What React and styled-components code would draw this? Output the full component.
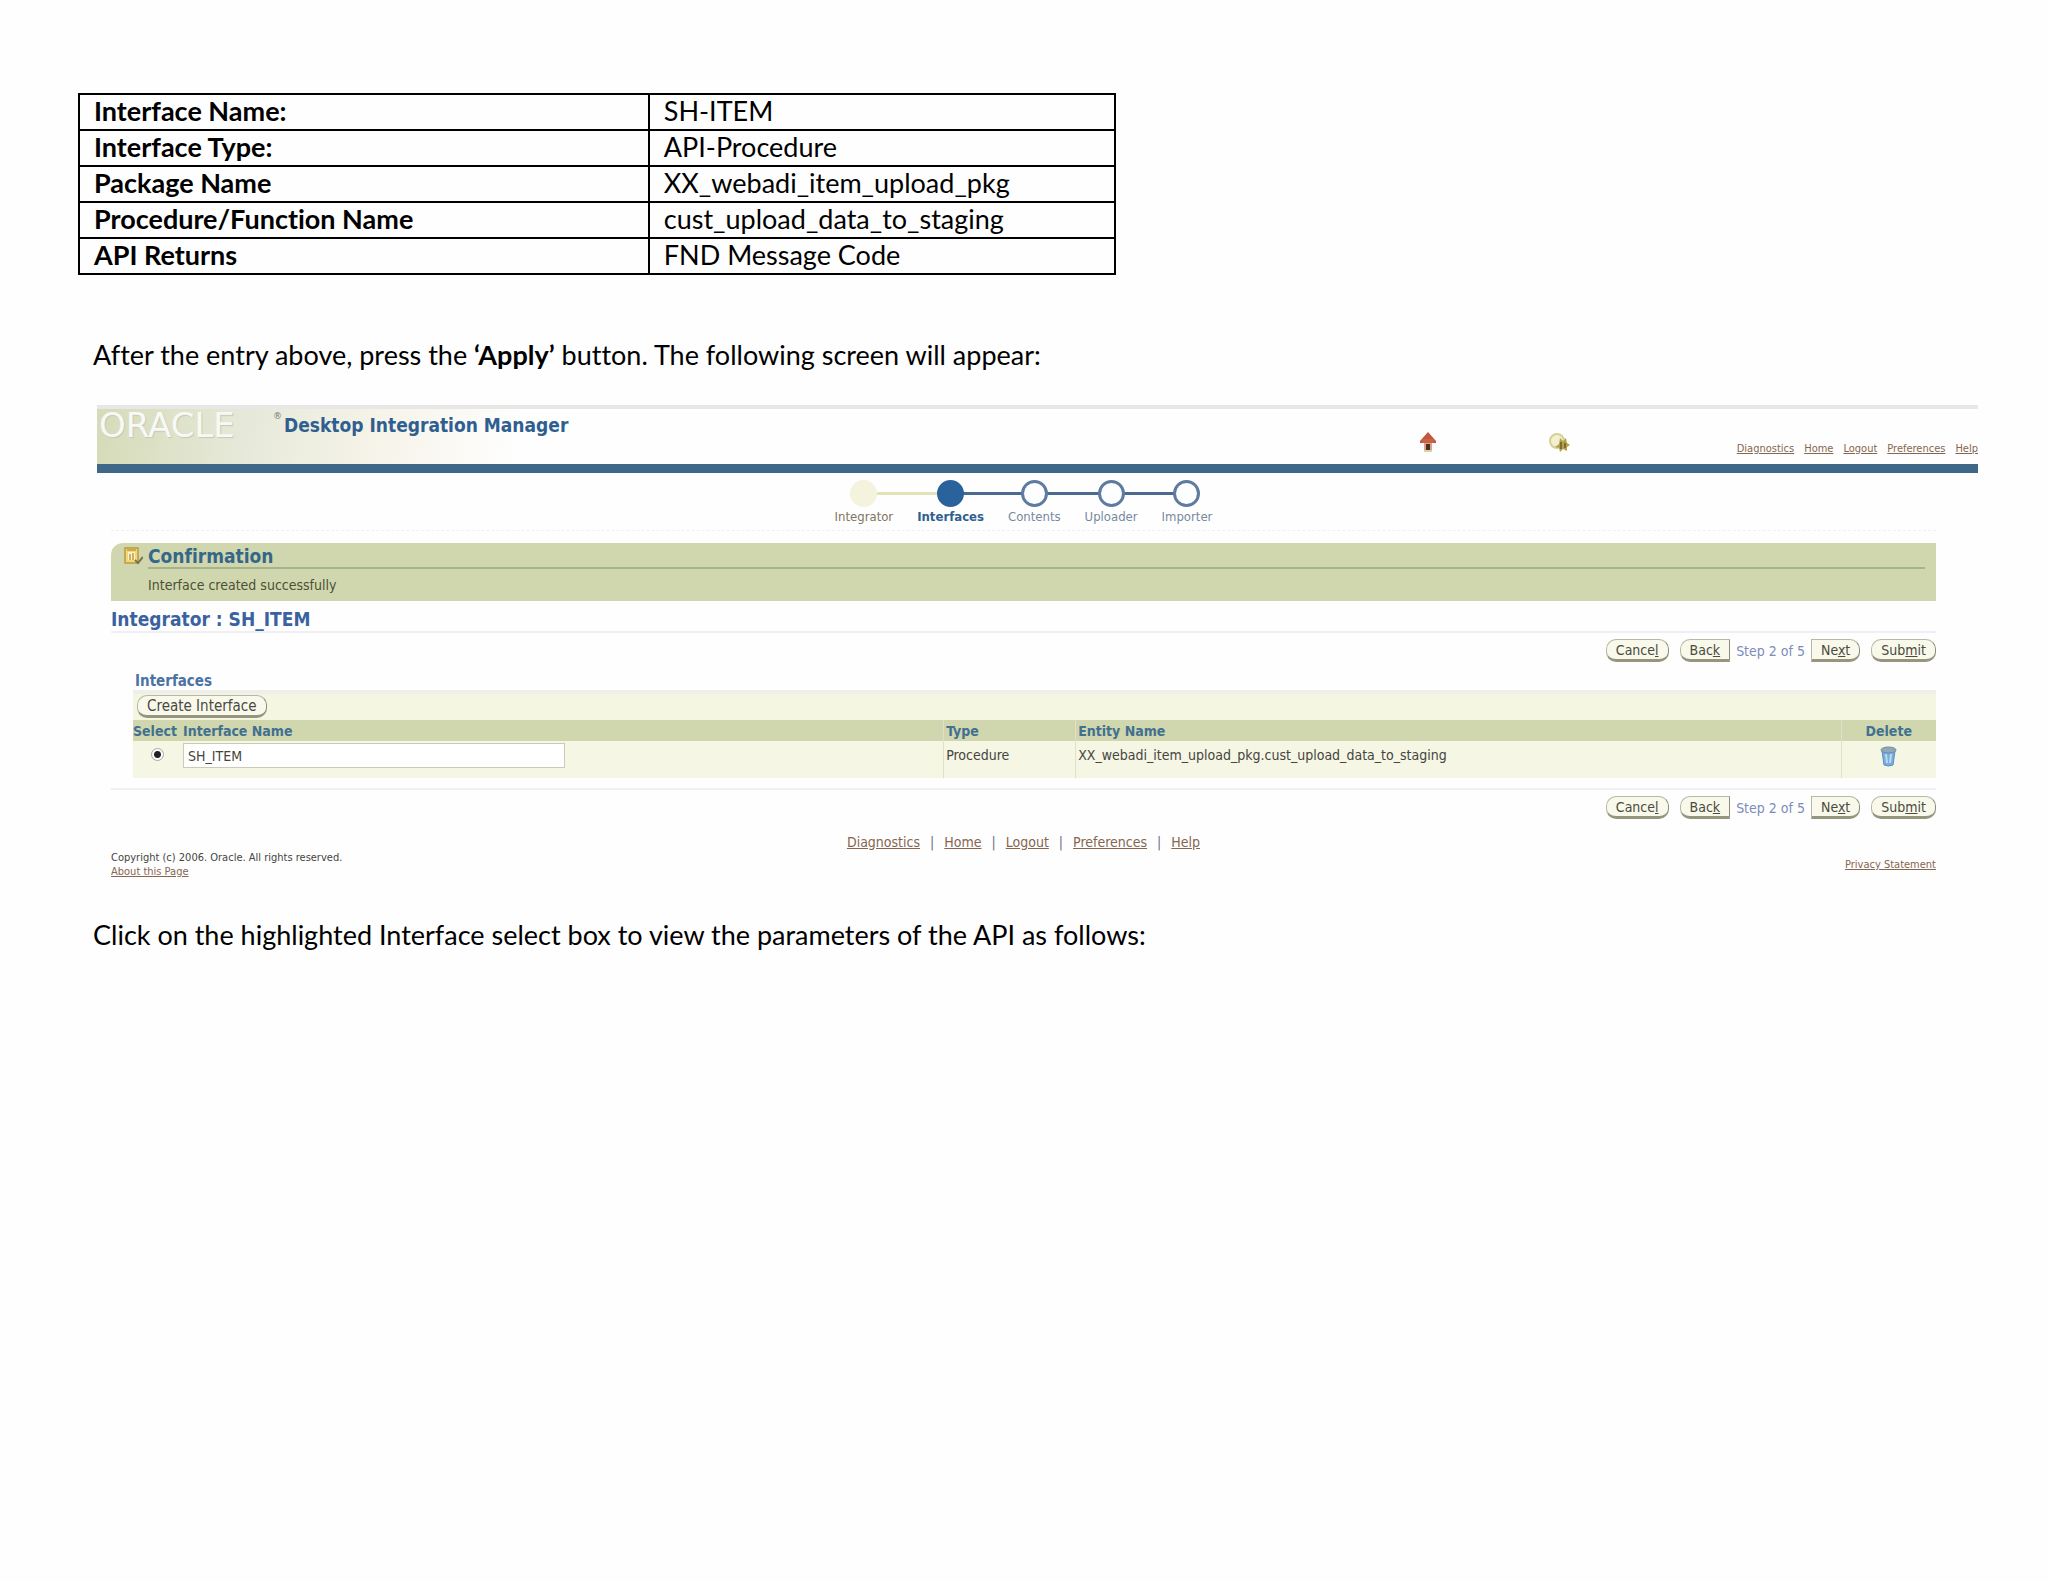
import React from "react";
import styled, { createGlobalStyle, css } from "styled-components";

const ui = '"DejaVu Sans Condensed", "DejaVu Sans", sans-serif';
const navy = "#2f5f90";
const line = "#f0eff3";

const Global = createGlobalStyle`
  * { box-sizing: border-box; }
  body {
    margin: 0;
    background: #fefefe;
    color: #000;
    font-family: Lato, "Liberation Sans", sans-serif;
    font-size: 27px;
    font-variant-ligatures: none;
    line-height: 36px;
  }
`;

const Page = styled.main`
  padding: 93px 70px 80px 78px;
`;

const SpecTable = styled.table`
  width: 1038px;
  max-width: 100%;
  table-layout: fixed;
  border-collapse: collapse;
  th, td {
    height: 36px;
    padding: 0 14px 2px;
    border: 2px solid #000;
    line-height: 32px;
    text-align: left;
  }
  th { width: 55%; font-weight: 700; }
`;

const Paragraph = styled.p`
  margin: ${(p) => (p.$spaced ? "62px" : "0")} 15px 0;
`;

const Screen = styled.section`
  margin: 32px 0 38px 19px;
  overflow: hidden;
  background: #fefefe;
  color: #45453f;
  font-family: ${ui};
  font-size: 14px;
  line-height: 18px;
`;

const Header = styled.header`
  display: flex;
  align-items: flex-start;
  height: 68px;
  border-top: 4px solid #e6e7e6;
  border-bottom: 9px solid #3f6788;
  background: linear-gradient(100deg, #d5dbb8 0, #e6e9d9 150px, #f6f3e9 280px, #fefefe 420px);
`;

const Logo = styled.div`
  display: flex;
  justify-content: space-between;
  width: 187px;
  padding: 2px 2px 0 2px;
  color: #f8f9f4;
  font-family: "DejaVu Sans", sans-serif;
  font-size: 34px;
  line-height: 28px;
  text-shadow: 1px 1px 1px #c3c8bc;
  sup {
    color: #777;
    font-size: 9px;
    line-height: 10px;
    text-shadow: none;
  }
`;

const Product = styled.h1`
  flex: 1;
  margin: 6px 0 0;
  color: ${navy};
  font-size: 19px;
  line-height: 20px;
`;

const HeaderIcons = styled.div`
  display: flex;
  gap: 111px;
  padding: 23px 167px 0 0;
  svg { display: block; }
`;

const HeaderLinks = styled.nav`
  display: flex;
  gap: 10px;
  padding-top: 31px;
  font-size: 11px;
`;

const Link = styled.a`
  color: #86664f;
  text-decoration: underline;
`;

const Body = styled.div`
  padding: 0 42px 0 14px;
`;

const Steps = styled.ol`
  display: flex;
  justify-content: center;
  gap: 24px;
  margin: 0;
  padding: 7px 0 5px;
  border-bottom: 1px dashed ${line};
  list-style: none;
  font-size: 13px;
  line-height: 16px;
`;

const connector = css`
  content: "";
  position: absolute;
  top: 12px;
  height: 3px;
`;

const Step = styled.li`
  position: relative;
  display: flex;
  flex-direction: column;
  align-items: center;
  gap: 2px;
  color: ${(p) => (p.$state === "done" ? "#80745f" : p.$state === "now" ? navy : "#7788a0")};
  font-weight: ${(p) => (p.$state === "now" ? 700 : 400)};
  &:not(:first-child)::before {
    ${connector}
    left: -12px;
    right: 50%;
    background: ${(p) => (p.$state === "now" ? "#e2e2b8" : "#4a6a92")};
  }
  &:not(:last-child)::after {
    ${connector}
    left: 50%;
    right: -12px;
    background: ${(p) => (p.$state === "done" ? "#e2e2b8" : "#4a6a92")};
  }
`;

const Dot = styled.span`
  z-index: 1;
  width: 27px;
  height: 27px;
  border: 3px solid ${(p) => (p.$state === "done" ? "#f4f3dd" : p.$state === "now" ? "#2a629b" : "#5f7ba0")};
  border-radius: 50%;
  background: ${(p) => (p.$state === "done" ? "#f4f3dd" : p.$state === "now" ? "#2a629b" : "#fcfeff")};
`;

const Message = styled.section`
  display: grid;
  grid-template-columns: 20px 1fr;
  column-gap: 5px;
  margin-top: 12px;
  padding: 2px 11px 7px 12px;
  border-radius: 12px 0 0 0;
  background: #d0d7ae;
  svg { margin-top: 1px; }
  h2 {
    margin: 0;
    border-bottom: 2px solid #a5b48a;
    color: #35678a;
    font-size: 19px;
    line-height: 22px;
  }
  p { grid-column: 2; margin: 7px 0 0; color: #4c4f35; }
`;

const Title = styled.h2`
  margin: 0;
  padding: 8px 0 2px;
  border-bottom: 2px solid ${line};
  color: #3a62a0;
  font-size: 19px;
  line-height: 20px;
`;

const Actions = styled.div`
  display: flex;
  justify-content: flex-end;
  align-items: center;
  gap: 11px;
  padding-top: 6px;
`;

const Pager = styled.div`
  display: flex;
  align-items: center;
  gap: 6px;
  color: #7d8cba;
`;

const radii = { both: "10px", left: "10px 0 0 10px", right: "0 10px 10px 0" };

const Button = styled.button`
  height: 23px;
  padding: 0 9px;
  border: 1px solid #b7b8a4;
  border-right-color: #8b8c78;
  border-bottom: 3px solid #96967f;
  border-radius: ${(p) => radii[p.$round || "both"]};
  background: #f8f9ea;
  color: #4a4a40;
  font: 14px/18px ${ui};
`;

const Section = styled.section`
  margin: 10px 0 10px 22px;
  h3 {
    margin: 0;
    padding-left: 2px;
    color: #4a72a5;
    font-size: 15px;
    line-height: 18px;
  }
`;

const Toolbar = styled.div`
  padding: 1px 4px 2px;
  border-top: 4px solid #eeefe6;
  background: #f4f6e1;
  ${Button} { display: block; font-size: 15px; }
`;

const Grid = styled.table`
  width: 100%;
  table-layout: fixed;
  border-collapse: collapse;
  background: #f5f6e4;
  th, td { padding: 0 2px; text-align: left; white-space: nowrap; }
  th {
    height: 21px;
    background: #d0d7ae;
    color: #417090;
    font-size: 14px;
  }
  td { height: 37px; vertical-align: top; padding-top: 5px; color: #45453f; }
  th + th, td + td { border-left: 1px solid #dfe2c6; }
  th:nth-child(2), td:nth-child(2) { border-left: 0; }
  th:first-child { padding: 0; }
  td:first-child { text-align: center; }
  td:nth-child(2) { padding-top: 2px; }
  th:last-child, td:last-child { text-align: center; }
`;

const Col = styled.col`
  width: ${(p) => p.$w};
`;

const Radio = styled.input`
  appearance: none;
  width: 13px;
  height: 13px;
  margin: 2px 0 0;
  border: 1px solid #a8a99c;
  border-radius: 50%;
  background: radial-gradient(circle, #222 0 3px, #fff 4px);
`;

const NameInput = styled.input`
  display: block;
  width: 382px;
  height: 25px;
  padding: 0 4px;
  border: 1px solid #c9cbb9;
  background: #fff;
  color: #45453f;
  font: 14px/18px ${ui};
`;

const IconButton = styled.button`
  padding: 0;
  border: 0;
  background: none;
  svg { display: block; }
`;

const Rule = styled.hr`
  margin: 0;
  border: 0;
  border-top: 2px solid ${line};
`;

const FooterLinks = styled.nav`
  display: flex;
  justify-content: center;
  gap: 10px;
  padding-top: 14px;
  color: #6a6f85;
`;

const Legal = styled.footer`
  display: flex;
  justify-content: space-between;
  align-items: center;
  font-size: 11px;
  line-height: 14px;
  p { margin: 0; }
`;

const links = ["Diagnostics", "Home", "Logout", "Preferences", "Help"];

const specs = [
  ["Interface Name:", "SH-ITEM"],
  ["Interface Type:", "API-Procedure"],
  ["Package Name", "XX_webadi_item_upload_pkg"],
  ["Procedure/Function Name", "cust_upload_data_to_staging"],
  ["API Returns", "FND Message Code"],
];

const steps = [
  ["Integrator", "done"],
  ["Interfaces", "now"],
  ["Contents", "next"],
  ["Uploader", "next"],
  ["Importer", "next"],
];

const HomeIcon = () => (
  <svg width="18" height="21" viewBox="0 0 18 21" aria-hidden="true">
    <path d="M9 0 17 9v2h-3V9H4v2H1V9z" fill="#c4563f" />
    <path d="M5 8h8v12H5z" fill="#d8a58c" />
    <path d="M3 7h12v4H3z" fill="#c9604a" />
    <path d="M7 12h4v6H7z" fill="#4e2e20" />
    <path d="M5 18h8v2H5z" fill="#d9d3a0" />
  </svg>
);

const KeyIcon = () => (
  <svg width="22" height="21" viewBox="0 0 22 21" aria-hidden="true">
    <circle cx="9" cy="9" r="7" fill="#f2f0cf" stroke="#d5cf98" strokeWidth="2" />
    <path d="m12 6 3 3 3-3 1 5 3 2-3 2v4l-4-2-3 3-1-4-4-1 4-3z" fill="#b5a04c" />
    <path d="M12 10h2v7h-2zm4 1h2v5h-2z" fill="#7d6b30" />
  </svg>
);

const ConfirmIcon = () => (
  <svg width="20" height="19" viewBox="0 0 20 19" aria-hidden="true">
    <path d="M2 2h13v15H2z" fill="#f0d777" stroke="#b99a45" strokeWidth="1.5" />
    <path d="M5 6h7v8H5z" fill="#fbf3cb" />
    <path d="M7 8v6M10 7v7M4 4h9" stroke="#c79a3a" strokeWidth="1.5" />
    <path d="m12 14 3 3 5-6" fill="none" stroke="#7b7455" strokeWidth="2" />
  </svg>
);

const TrashIcon = () => (
  <svg width="17" height="21" viewBox="0 0 17 21" aria-hidden="true">
    <path d="M2 5h13l-2 14q-4 2-9 0z" fill="#78aede" stroke="#5b8fc8" />
    <ellipse cx="8.500" cy="4" rx="7.500" ry="3" fill="#8ea9b8" stroke="#6d8ba3" />
    <path d="m6 8 1 9M11 8l-1 9" stroke="#b8dcf5" strokeWidth="2" />
  </svg>
);

const Wizard = () => (
  <Actions>
    <Button type="button">Cance<u>l</u></Button>
    <Pager>
      <Button type="button" $round="left">Bac<u>k</u></Button>
      <span>Step 2 of 5</span>
      <Button type="button" $round="right">Ne<u>x</u>t</Button>
    </Pager>
    <Button type="button">Sub<u>m</u>it</Button>
  </Actions>
);

export default function App() {
  return (
    <Page>
      <Global />
      <SpecTable>
        <tbody>
          {specs.map(([name, value]) => (
            <tr key={name}>
              <th scope="row">{name}</th>
              <td>{value}</td>
            </tr>
          ))}
        </tbody>
      </SpecTable>

      <Paragraph $spaced>
        After the entry above, press the <b>‘Apply’</b> button. The following screen will appear:
      </Paragraph>

      <Screen>
        <Header>
          <Logo>
            <span>ORACLE</span>
            <sup>®</sup>
          </Logo>
          <Product>Desktop Integration Manager</Product>
          <HeaderIcons>
            <HomeIcon />
            <KeyIcon />
          </HeaderIcons>
          <HeaderLinks>
            {links.map((l) => <Link href="#" key={l}>{l}</Link>)}
          </HeaderLinks>
        </Header>

        <Body>
          <Steps>
            {steps.map(([label, state]) => (
              <Step key={label} $state={state}>
                <Dot $state={state} />
                {label}
              </Step>
            ))}
          </Steps>

          <Message>
            <ConfirmIcon />
            <h2>Confirmation</h2>
            <p>Interface created successfully</p>
          </Message>

          <Title>Integrator : SH_ITEM</Title>
          <Wizard />

          <Section>
            <h3>Interfaces</h3>
            <Toolbar>
              <Button type="button">Create Interface</Button>
            </Toolbar>
            <Grid>
              <colgroup>
                <Col $w="48px" />
                <Col $w="42.3%" />
                <Col $w="132px" />
                <Col $w="auto" />
                <Col $w="95px" />
              </colgroup>
              <thead>
                <tr>
                  <th>Select</th>
                  <th>Interface Name</th>
                  <th>Type</th>
                  <th>Entity Name</th>
                  <th>Delete</th>
                </tr>
              </thead>
              <tbody>
                <tr>
                  <td><Radio type="radio" name="interface" aria-label="Select SH_ITEM" defaultChecked /></td>
                  <td><NameInput aria-label="Interface Name" defaultValue="SH_ITEM" /></td>
                  <td>Procedure</td>
                  <td>XX_webadi_item_upload_pkg.cust_upload_data_to_staging</td>
                  <td><IconButton type="button" aria-label="Delete"><TrashIcon /></IconButton></td>
                </tr>
              </tbody>
            </Grid>
          </Section>

          <Rule />
          <Wizard />

          <FooterLinks>
            {links.map((l, i) => (
              <React.Fragment key={l}>
                {i > 0 && <span>|</span>}
                <Link href="#">{l}</Link>
              </React.Fragment>
            ))}
          </FooterLinks>
          <Legal>
            <div>
              <p>Copyright (c) 2006. Oracle. All rights reserved.</p>
              <Link href="#">About this Page</Link>
            </div>
            <Link href="#">Privacy Statement</Link>
          </Legal>
        </Body>
      </Screen>

      <Paragraph>
        Click on the highlighted Interface select box to view the parameters of the API as follows:
      </Paragraph>
    </Page>
  );
}
